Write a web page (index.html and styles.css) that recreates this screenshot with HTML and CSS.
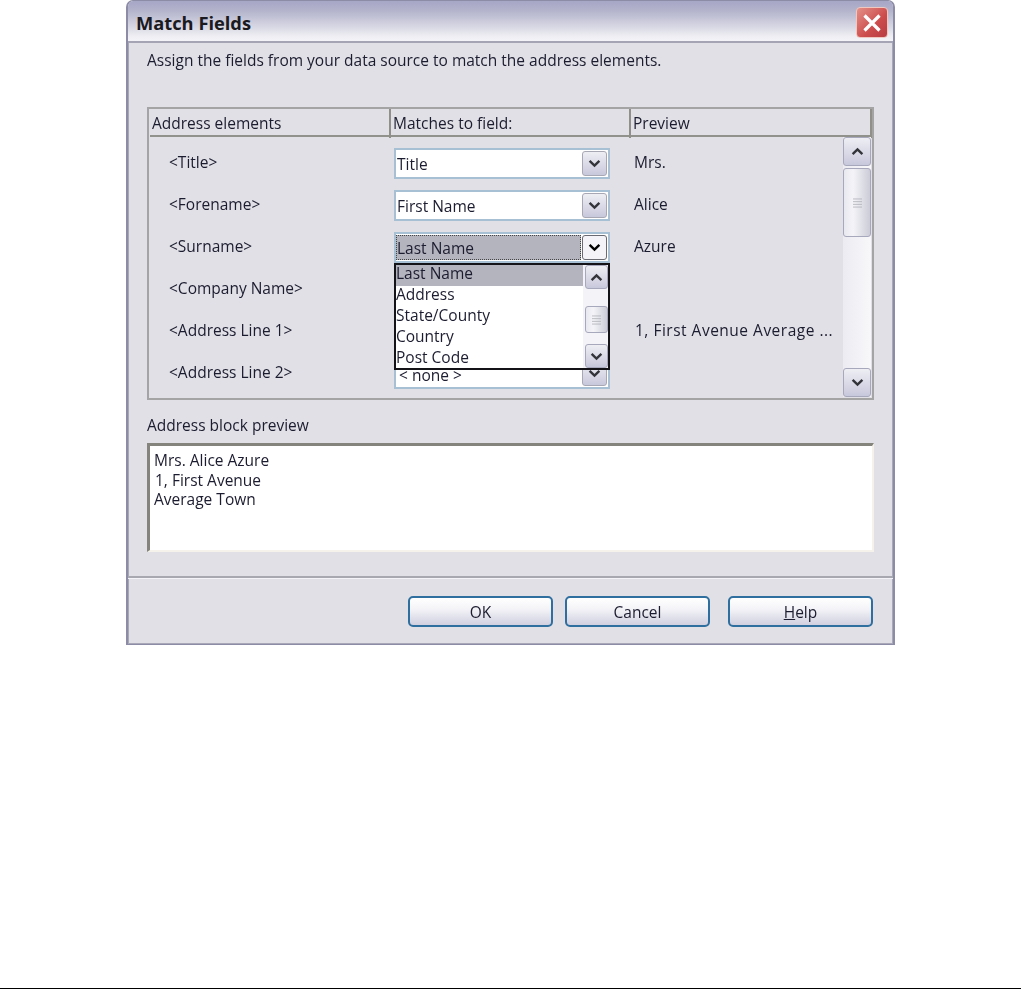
FILE: index.html
```html
<!DOCTYPE html>
<html lang="en">
<head>
<meta charset="utf-8">
<title>Match Fields</title>
<link rel="stylesheet" href="styles.css">
</head>
<body>
<svg class="defs" width="0" height="0" aria-hidden="true"><defs>
  <symbol id="chev" viewBox="0 0 12 8"><path d="M1.5 1.5 6 6l4.500-4.500" fill="none" stroke="currentColor" stroke-width="2.200"/></symbol>
  <symbol id="grip" viewBox="0 0 10 10"><path d="M0 .5h10M0 3.500h10M0 6.500h10M0 9.500h10" fill="none" stroke="currentColor"/></symbol>
</defs></svg>
<main class="stage">
  <section class="dialog">
    <header class="titlebar">
      <h1 class="title">Match Fields</h1>
      <button class="close" aria-label="Close"><svg viewBox="0 0 16 16" width="20" height="20"><path d="M2 2 14 14M14 2 2 14" stroke="#fff" stroke-width="2.600" fill="none"/></svg></button>
    </header>
    <div class="content">
      <p class="intro">Assign the fields from your data source to match the address elements.</p>
      <div class="table">
        <div class="thead">
          <div class="th th-a">Address elements</div>
          <div class="th th-b">Matches to field:</div>
          <div class="th th-c">Preview</div>
        </div>
        <div class="tbody">
          <div class="rows">
            <div class="row"><span class="label">&lt;Title&gt;</span><div class="combo"><span class="value">Title</span><span class="btn"><svg><use href="#chev"/></svg></span></div><span class="pv">Mrs.</span></div>
            <div class="row"><span class="label">&lt;Forename&gt;</span><div class="combo"><span class="value">First Name</span><span class="btn"><svg><use href="#chev"/></svg></span></div><span class="pv">Alice</span></div>
            <div class="row"><span class="label">&lt;Surname&gt;</span><div class="combo active"><span class="value">Last Name</span><span class="btn"><svg><use href="#chev"/></svg></span></div><span class="pv">Azure</span></div>
            <div class="row"><span class="label">&lt;Company Name&gt;</span><div class="combo"><span class="value"></span></div><span class="pv"></span></div>
            <div class="row"><span class="label">&lt;Address Line 1&gt;</span><div class="combo"><span class="value"></span></div><span class="pv pv-long">1, First Avenue Average ...</span></div>
            <div class="row"><span class="label">&lt;Address Line 2&gt;</span><div class="combo"><span class="value none">&lt; none &gt;</span><span class="btn"><svg><use href="#chev"/></svg></span></div><span class="pv"></span></div>
          </div>
          <div class="vscroll">
            <span class="sbtn"><svg class="up"><use href="#chev"/></svg></span>
            <span class="thumb"><svg><use href="#grip"/></svg></span>
            <span class="track"></span>
            <span class="sbtn"><svg><use href="#chev"/></svg></span>
          </div>
          <div class="popup">
            <ul class="list">
              <li class="sel">Last Name</li>
              <li>Address</li>
              <li>State/County</li>
              <li>Country</li>
              <li>Post Code</li>
            </ul>
            <div class="pscroll">
              <span class="psbtn"><svg class="up"><use href="#chev"/></svg></span>
              <span class="ptrack"></span>
              <span class="pthumb"><svg><use href="#grip"/></svg></span>
              <span class="ptrack short"></span>
              <span class="psbtn"><svg><use href="#chev"/></svg></span>
            </div>
          </div>
        </div>
      </div>
      <div class="block-label">Address block preview</div>
      <div class="block"><div>Mrs. Alice Azure</div><div class="nudge">1, First Avenue</div><div>Average Town</div></div>
    </div>
    <footer class="actions">
      <button class="action">OK</button>
      <button class="action">Cancel</button>
      <button class="action help"><u>H</u>elp</button>
    </footer>
  </section>
</main>
<div class="rule"></div>
</body>
</html>
```
FILE: styles.css
```css
* { box-sizing: border-box; }
html, body { margin: 0; padding: 0; background: #fff; }
body { width: 1021px; height: 989px; position: relative; font-family: "Open Sans", "Noto Sans", sans-serif; font-size: 15.500px; color: #1c1c30; overflow: hidden; }
.defs { position: absolute; }
.stage { padding-left: 126px; }
.dialog { width: 769px; height: 645px; display: flex; flex-direction: column; background: #e0e0e6; border: 2px solid #8c8ca6; border-bottom-width: 1px; border-top-width: 1px; border-radius: 7px 7px 0 0; overflow: hidden; box-shadow: inset 0 0 0 1px #e8e8ee; filter: blur(.35px); }
.titlebar { height: 42px; flex: none; display: flex; align-items: center; justify-content: space-between; padding: 0 5px 0 8px; background: linear-gradient(#a6a6c6 0, #b4b4cc 25%, #d8d8e4 65%, #f0f0f4 90%, #f4f4f8 100%); border-bottom: 2px solid #a4a4b4; }
.title { margin: 3px 0 0; font-size: 18.300px; font-weight: 700; color: #1a1a20; }
.close { width: 32px; height: 31px; padding: 0; margin-top: 3px; display: flex; align-items: center; justify-content: center; border: 1px solid #f0c8c0; border-radius: 4px; background: linear-gradient(135deg, #e49088, #cc4c4c 60%, #b83c44); }
.content { flex: 1; padding: 7px 18px 0 19px; box-shadow: inset 1px 0 0 #a8a8b8, inset -1px 0 0 #a8a8b8; }
.intro { margin: 0; height: 57px; line-height: 20px; }
.table { width: 727px; height: 293px; border: 2px solid #a4a4a4; }
.thead { height: 28px; display: grid; grid-template-columns: 241px 240px 241px; border-bottom: 2px solid #92928c; margin-left: 1px; margin-right: 1px; }
.th { line-height: 29px; padding-left: 2px; border-right: 2px solid #909088; white-space: nowrap; }
.tbody { position: relative; height: 261px; display: flex; }
.rows { flex: 1; padding-top: 11px; display: flex; flex-direction: column; gap: 11px; }
.row { height: 31px; display: grid; grid-template-columns: 245px 237px 1fr; align-items: center; white-space: nowrap; }
.label { padding-left: 20px; margin-top: -3px; }
.combo { width: 216px; height: 31px; display: flex; align-items: center; background: #fff; border: 2px solid #a8c0d4; padding: 1px 1px 1px 0; }
.value { flex: 1; padding-left: 1px; height: 100%; line-height: 26px; }
.value.none { line-height: 18px; padding-left: 3px; align-self: flex-end; height: 20px; }
.btn { width: 25px; height: 25px; flex: none; display: flex; align-items: center; justify-content: center; color: #33333a; background: linear-gradient(#eeeef4, #c8c8dc); border: 1px solid #a8a8b4; border-radius: 3px; }
.btn svg, .sbtn svg, .psbtn svg { width: 13px; height: 9px; }
.up { transform: rotate(180deg); }
.active .value { background: #b4b4bf; border: 1px dotted #444; line-height: 24px; padding-left: 0; }
.active .btn { color: #000; background: #f4f4f8; border-color: #6a6a72; margin-left: 1px; }
.pv { padding-left: 3px; margin-top: -3px; }
.pv-long { padding-left: 4px; margin-top: -4px; letter-spacing: .5px; }
.vscroll { width: 28px; flex: none; margin: 0 1px 1px 0; display: flex; flex-direction: column; background: linear-gradient(90deg, #ecebf2, #f8f8fa); }
.sbtn { height: 29px; flex: none; display: flex; align-items: center; justify-content: center; color: #33333a; background: linear-gradient(#eeeef4, #c8c8dc); border: 1px solid #a8a8bc; border-radius: 3px; }
.thumb { height: 69px; flex: none; margin-top: 2px; display: flex; align-items: center; justify-content: center; color: #b4b4bc; background: linear-gradient(90deg, #e8e8f0, #f4f4f8 35%, #ccccd8); border: 1px solid #a8a8bc; border-radius: 3px; }
.thumb svg, .pthumb svg { width: 9px; height: 10px; }
.track { flex: 1; }
.popup { position: absolute; left: 245px; top: 126px; width: 216px; height: 107px; display: flex; background: #fff; border: 2px solid #141418; }
.list { flex: 1; margin: 0; padding: 0; list-style: none; }
.list li { height: 21px; line-height: 17px; padding-left: 0; }
.list .sel { background: #b4b4bf; }
.pscroll { width: 25px; flex: none; display: flex; flex-direction: column; background: #f4f4f8; }
.psbtn { height: 24px; margin-left: 2px; flex: none; display: flex; align-items: center; justify-content: center; color: #33333a; background: linear-gradient(#eeeef4, #c8c8dc); border: 1px solid #a8a8bc; border-radius: 3px; }
.ptrack { flex: 1; }
.ptrack.short { flex: none; height: 11px; }
.pthumb { height: 27px; margin-left: 2px; flex: none; display: flex; align-items: center; justify-content: center; color: #b4b4bc; background: linear-gradient(90deg, #e8e8f0, #f4f4f8 35%, #ccccd8); border: 1px solid #a8a8bc; border-radius: 3px; }
.block-label { margin-top: 14px; height: 29px; line-height: 22px; }
.block { width: 727px; height: 109px; background: #fff; border: 3px solid #84847c; border-right: 2px solid #f4f2ea; border-bottom: 2px solid #f4f2ea; padding: 5px 4px; line-height: 19.500px; }
.nudge { padding-left: 1px; }
.actions { height: 68px; flex: none; display: flex; gap: 12px; padding: 18px 19px 0 280px; border-top: 2px solid #a8a8b0; box-shadow: inset 0 1px 0 #f4f4f8, inset 1px 0 0 #a8a8b8, inset -1px 0 0 #a8a8b8, inset 0 -1px 0 #a8a8b8; }
.action { width: 145px; height: 31px; padding: 0; font: inherit; color: #1c1c30; border: 2px solid #2f6f9f; border-radius: 5px; background: linear-gradient(#fff, #f4f4f8 40%, #d0d0e0); }
.help { margin-left: 6px; }
.rule { position: absolute; left: 0; right: 0; bottom: 0; height: 1px; background: #000; }
```
